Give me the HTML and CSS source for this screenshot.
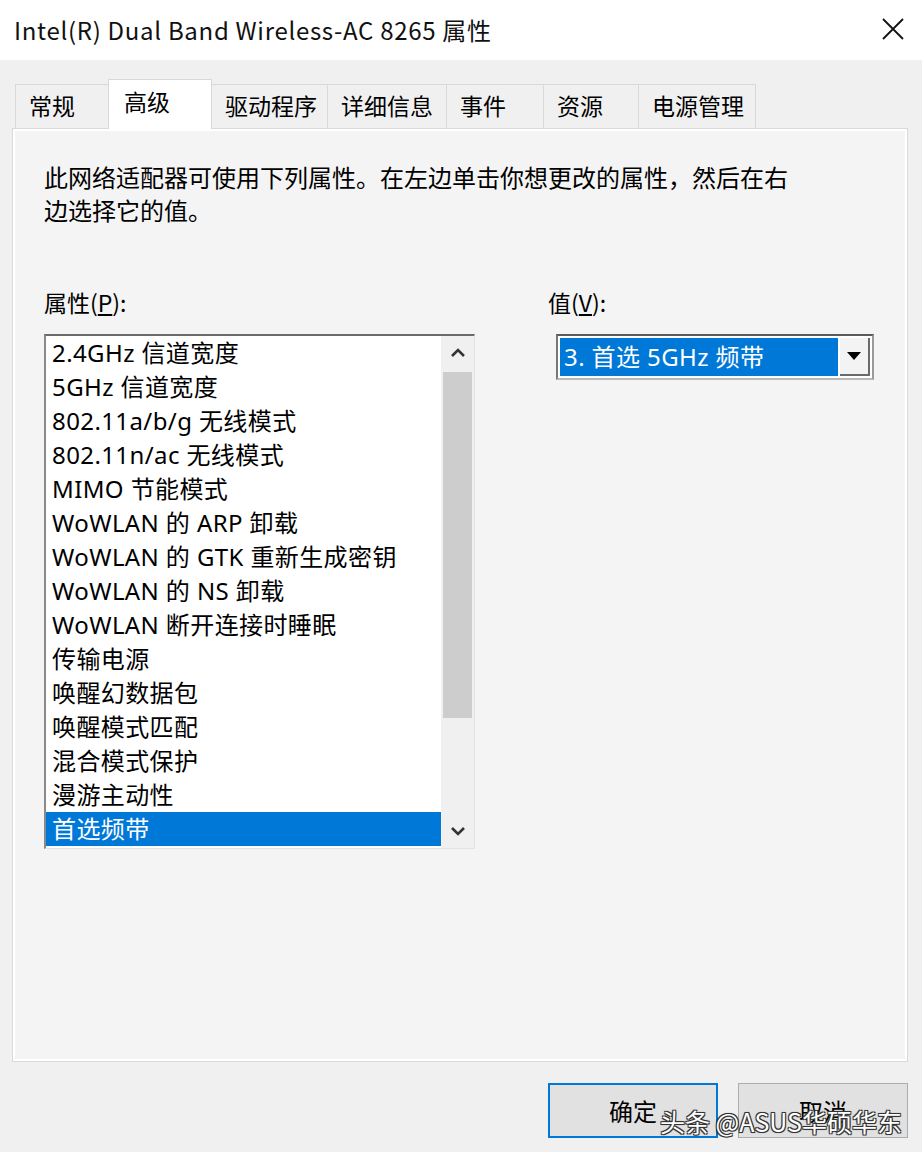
FILE: index.html
```html
<!DOCTYPE html>
<html lang="zh-CN">
<head>
<meta charset="utf-8">
<title>Intel(R) Dual Band Wireless-AC 8265 属性</title>
<link rel="stylesheet" href="styles.css">
</head>
<body>
<div class="dialog">
    <div class="titlebar">
        <span class="title">Intel(R) Dual Band Wireless-AC 8265 属性</span>
        <svg class="close" width="24" height="24" viewBox="0 0 24 24">
            <path d="M2 2 L22 22 M22 2 L2 22" stroke="#111" stroke-width="1.8" fill="none"/>
        </svg>
    </div>

    <div class="tabs">
        <div class="tab" style="width:94px">常规</div>
        <div class="tab active" style="width:104px">高级</div>
        <div class="tab" style="width:117px">驱动程序</div>
        <div class="tab" style="width:120px">详细信息</div>
        <div class="tab" style="width:98px">事件</div>
        <div class="tab" style="width:96px">资源</div>
        <div class="tab" style="width:118px">电源管理</div>
    </div>

    <div class="panel">
        <p class="desc">此网络适配器可使用下列属性。在左边单击你想更改的属性，然后在右<br>边选择它的值。</p>

        <div class="columns">
            <div class="col">
                <div class="label">属性(<u>P</u>):</div>
                <div class="listbox">
                    <ul class="items">
                        <li>2.4GHz 信道宽度</li>
                        <li>5GHz 信道宽度</li>
                        <li>802.11a/b/g 无线模式</li>
                        <li>802.11n/ac 无线模式</li>
                        <li>MIMO 节能模式</li>
                        <li>WoWLAN 的 ARP 卸载</li>
                        <li>WoWLAN 的 GTK 重新生成密钥</li>
                        <li>WoWLAN 的 NS 卸载</li>
                        <li>WoWLAN 断开连接时睡眠</li>
                        <li>传输电源</li>
                        <li>唤醒幻数据包</li>
                        <li>唤醒模式匹配</li>
                        <li>混合模式保护</li>
                        <li>漫游主动性</li>
                        <li class="selected">首选频带</li>
                    </ul>
                    <div class="scrollbar">
                        <div class="arrow">
                            <svg width="14" height="10" viewBox="0 0 14 10"><path d="M1 8 L7 2 L13 8" stroke="#333" stroke-width="2.6" fill="none"/></svg>
                        </div>
                        <div class="track"><div class="thumb"></div></div>
                        <div class="arrow">
                            <svg width="14" height="10" viewBox="0 0 14 10"><path d="M1 2 L7 8 L13 2" stroke="#333" stroke-width="2.6" fill="none"/></svg>
                        </div>
                    </div>
                </div>
            </div>
            <div class="col">
                <div class="label">值(<u>V</u>):</div>
                <div class="combo">
                    <div class="combo-value">3. 首选 5GHz 频带</div>
                    <div class="combo-btn">
                        <svg width="14" height="8" viewBox="0 0 14 8"><path d="M0 0 H14 L7 8 Z" fill="#000"/></svg>
                    </div>
                </div>
            </div>
        </div>
    </div>

    <div class="buttons">
        <button class="btn default">确定</button>
        <button class="btn">取消</button>
        <span class="watermark">头条 @ASUS华硕华东</span>
    </div>
</div>
</body>
</html>
```

FILE: styles.css
```css
*{
	box-sizing:border-box;
}
body{
	margin:0;
	background:#f0f0f0;
	font-family:"Noto Sans CJK SC", "Noto Sans", sans-serif;
	color:#000;
}
.dialog{
	width:922px;
	height:1152px;
	position:relative;
	overflow:hidden;
}

/* 标题栏 */
.titlebar{
	height:60px;
	background:#fff;
	display:flex;
	align-items:center;
	justify-content:space-between;
	padding:0 17px 2px 14px;
}
.title{
	font-size:24px;
	letter-spacing:0.7px;
	color:#111;
}

/* 选项卡 */
.tabs{
	display:flex;
	align-items:flex-end;
	padding:18px 0 0 15px;
	height:68px;
}
.tab{
	height:44px;
	background:#f0f0f0;
	border:1px solid #d9d9d9;
	border-bottom:none;
	margin-right:-1px;
	font-size:23px;
	line-height:40px;
	padding-left:13px;
}
.tab.active{
	height:50px;
	background:#fff;
	line-height:42px;
	padding-left:15px;
	position:relative;
	z-index:2;
	margin-bottom:-1px;
}

.panel{
	margin:0 14px 0 12px;
	height:934px;
	border:1px solid #d9d9d9;
	box-shadow:inset 0 0 0 2px #fff;
	background:#f4f4f4;
	padding:31px 0 0 31px;
}
.desc{
	margin:0;
	font-size:24px;
	line-height:33px;
}
.columns{
	display:grid;
	grid-template-columns:431px 1fr;
	column-gap:73px;
	margin-top:59px;
}
.label{
	font-size:23px;
	line-height:34px;
	margin-bottom:15px;
}

/* 列表框 */
.listbox{
	height:515px;
	background:#fff;
	border-top:2px solid #6b6b6b;
	border-left:2px solid #8a8a8a;
	border-right:1px solid #e3e3e3;
	border-bottom:1px solid #e3e3e3;
	display:flex;
}
.items{
	list-style:none;
	margin:0;
	padding:0;
	flex:1;
	font-family:"Noto Sans", "Noto Sans CJK SC", sans-serif;
}
.items li{
	height:34px;
	line-height:34px;
	font-size:24px;
	letter-spacing:0.4px;
	padding-left:6px;
	white-space:nowrap;
}
.items li.selected{
	background:#0078d7;
	color:#fff;
}
.scrollbar{
	width:33px;
	background:#f0f0f0;
	display:flex;
	flex-direction:column;
}
.arrow{
	height:34px;
	display:flex;
	align-items:center;
	justify-content:center;
}
.track{
	flex:1;
	padding:2px;
}
.thumb{
	height:346px;
	background:#cdcdcd;
}

/* 下拉框 */
.combo{
	margin-left:8px;
	width:318px;
	height:46px;
	border-top:2px solid #5a5a5a;
	border-left:2px solid #777;
	border-right:2px solid #9a9a9a;
	border-bottom:2px solid #b8b8b8;
	background:#fff;
	display:flex;
	padding:2px;
}
.combo-value{
	width:278px;
	background:#0078d7;
	color:#fff;
	font-family:"Noto Sans", "Noto Sans CJK SC", sans-serif;
	font-size:24px;
	letter-spacing:0.4px;
	line-height:38px;
	padding-left:4px;
	white-space:nowrap;
}
.combo-btn{
	flex:1;
	margin-left:2px;
	background:#f3f3f3;
	border-right:2px solid #6a6a6a;
	border-bottom:2px solid #6a6a6a;
	display:flex;
	align-items:center;
	justify-content:center;
}

/* 按钮 */
.buttons{
	display:flex;
	justify-content:flex-end;
	gap:20px;
	padding:21px 14px 0 0;
	position:relative;
}
.btn{
	width:170px;
	height:55px;
	background:#e1e1e1;
	border:1px solid #adadad;
	font-family:"Noto Sans CJK SC", sans-serif;
	font-size:24px;
	color:#000;
	padding:0;
}
.btn.default{
	border:2px solid #0078d7;
}
.watermark{
	position:absolute;
	left:660px;
	top:41px;
	font-size:25px;
	color:#fff;
	text-shadow:-1px -1px 0 #333, 1px -1px 0 #333, -1px 1px 0 #333, 1px 1px 0 #333, 0 0 2px #000;
}
```
